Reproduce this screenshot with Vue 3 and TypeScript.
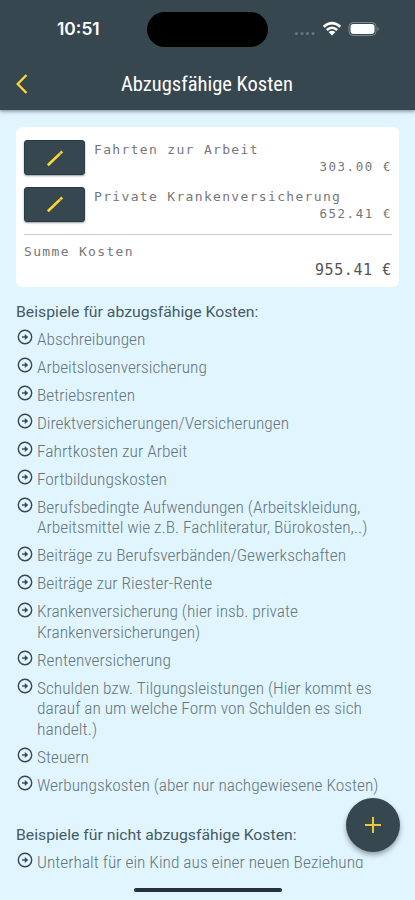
<script setup lang="ts">
import { nextTick } from 'vue'

interface Line { text: string; width: number }

const costs = [
  { name: 'Fahrten zur Arbeit', amount: '303.00 €' },
  { name: 'Private Krankenversicherung', amount: '652.41 €' },
]

const deductible: Line[][] = [
  [{ text: 'Abschreibungen', width: 108 }],
  [{ text: 'Arbeitslosenversicherung', width: 170 }],
  [{ text: 'Betriebsrenten', width: 98 }],
  [{ text: 'Direktversicherungen/Versicherungen', width: 252.5 }],
  [{ text: 'Fahrtkosten zur Arbeit', width: 150 }],
  [{ text: 'Fortbildungskosten', width: 129.5 }],
  [
    { text: 'Berufsbedingte Aufwendungen (Arbeitskleidung,', width: 323 },
    { text: 'Arbeitsmittel wie z.B. Fachliteratur, Bürokosten,..)', width: 330 },
  ],
  [{ text: 'Beiträge zu Berufsverbänden/Gewerkschaften', width: 309 }],
  [{ text: 'Beiträge zur Riester-Rente', width: 175 }],
  [
    { text: 'Krankenversicherung (hier insb. private', width: 261 },
    { text: 'Krankenversicherungen)', width: 163 },
  ],
  [{ text: 'Rentenversicherung', width: 134 }],
  [
    { text: 'Schulden bzw. Tilgungsleistungen (Hier kommt es', width: 335 },
    { text: 'darauf an um welche Form von Schulden es sich', width: 325 },
    { text: 'handelt.)', width: 60 },
  ],
  [{ text: 'Steuern', width: 52 }],
  [{ text: 'Werbungskosten (aber nur nachgewiesene Kosten)', width: 342 }],
]

const notDeductible: Line[][] = [
  [{ text: 'Unterhalt für ein Kind aus einer neuen Beziehung', width: 327 }],
]

const groups = [
  { title: 'Beispiele für abzugsfähige Kosten:', width: 242, items: deductible },
  { title: 'Beispiele für nicht abzugsfähige Kosten:', width: 280.5, items: notDeductible },
]

// Condenses a line of text to the given width.
const vFit = {
  mounted(el: HTMLElement, binding: { value: number }) {
    nextTick(() => {
      el.style.transform = `scaleX(${binding.value / el.offsetWidth})`
    })
  },
}
</script>

<template>
  <div class="screen">
    <header class="top">
      <div class="status">
        <span class="time"><span v-fit="43" class="fit">10:51</span></span>
        <span class="island"></span>
        <span class="signals">
          <svg class="dots" width="22" height="5" viewBox="0 0 22 5">
            <circle cx="2.5" cy="2.5" r="1.5" /><circle cx="8" cy="2.5" r="1.5" />
            <circle cx="13.5" cy="2.5" r="1.5" /><circle cx="19" cy="2.5" r="1.5" />
          </svg>
          <svg class="wifi" width="20" height="16" viewBox="0 0 20 16">
            <path d="M1.7 5.8Q10-1.6 18.3 5.8M4.8 9Q10 4.5 15.2 9" />
            <path class="solid" d="M6.6 11Q10 8.4 13.4 11L10 14.5Z" />
          </svg>
          <svg class="battery" width="32" height="16" viewBox="0 0 32 16">
            <rect class="shell" x="1" y="1.5" width="27" height="13" rx="4" />
            <rect class="charge" x="2.5" y="3" width="24" height="10" rx="3" />
            <path class="charge tip" d="M29.5 6Q32 8 29.5 10Z" />
          </svg>
        </span>
      </div>
      <div class="bar">
        <svg class="back" width="14" height="22" viewBox="0 0 14 22"><path d="M11.5 2 2.7 11l8.8 9" /></svg>
        <h1><span v-fit="172" class="fit">Abzugsfähige Kosten</span></h1>
      </div>
    </header>

    <main>
      <section class="card">
        <div v-for="cost in costs" :key="cost.name" class="cost">
          <button class="edit" aria-label="Bearbeiten">
            <svg width="18" height="18" viewBox="0 0 18 18"><path d="M1.8 16.2 14 4.6" /><path d="M14.2 4.4l2-1.9" /></svg>
          </button>
          <div class="detail">
            <span class="mono">{{ cost.name }}</span>
            <span class="mono amount">{{ cost.amount }}</span>
          </div>
        </div>
        <div class="sum">
          <span class="mono">Summe Kosten</span>
          <span class="mono total">955.41 €</span>
        </div>
      </section>

      <section v-for="group in groups" :key="group.title" class="group">
        <h2><span v-fit="group.width" class="fit">{{ group.title }}</span></h2>
        <ul>
          <li v-for="(item, i) in group.items" :key="i">
            <svg class="bullet" width="16" height="16" viewBox="0 0 16 16">
              <circle cx="8" cy="8" r="6.7" />
              <path d="M5 8h5" /><path class="head" d="M7.8 5 11.2 8l-3.4 3Z" />
            </svg>
            <div>
              <div v-for="line in item" :key="line.text" class="line">
                <span v-fit="line.width" class="fit">{{ line.text }}</span>
              </div>
            </div>
          </li>
        </ul>
      </section>
    </main>

    <footer><span class="home"></span></footer>
    <button class="add" aria-label="Hinzufügen">
      <svg width="18" height="18" viewBox="0 0 18 18"><path d="M9 1v16M1 9h16" /></svg>
    </button>
  </div>
</template>

<style>
body { background: #e1f5fe; }
</style>

<style scoped>
.screen {
  position: relative;
  display: flex;
  flex-direction: column;
  height: 900px;
  overflow: hidden;
  background: #e1f5fe;
  color: #37474f;
  font-family: Roboto, sans-serif;
}
.fit {
  display: inline-block;
  white-space: nowrap;
  transform-origin: left center;
}
.top {
  flex: none;
  height: 110px;
  background: #37474f;
  box-shadow: 0 1px 4px rgba(0, 0, 0, .5);
  color: #fff;
  z-index: 1;
}
.status {
  display: grid;
  grid-template-columns: 147px 121px 1fr;
  height: 58px;
  align-items: center;
}
.time { padding-left: 57px; font: 600 17px/20px Inter, sans-serif; }
.island { height: 35px; border-radius: 18px; background: #000; }
.signals { display: flex; align-items: center; padding-left: 26px; }
.dots { fill: #6b777d; margin-top: 8px; }
.wifi { margin-left: 6px; fill: none; stroke: #fff; stroke-width: 2.6; }
.wifi .solid { fill: #fff; stroke: none; }
.battery { margin-left: 6px; }
.shell { fill: none; stroke: #7b878c; stroke-width: 1; }
.charge { fill: #fff; }
.tip { fill: #87939a; }
.bar {
  display: grid;
  grid-template-columns: 106px 1fr;
  height: 52px;
  align-items: center;
}
.back { margin-left: 15px; fill: none; stroke: #fdd835; stroke-width: 2.3; }
h1 {
  margin: 0 0 0 15px;
  font-size: 21px;
  line-height: 28px;
  font-weight: 400;
  font-stretch: 75%;
}
main { flex: none; height: 757.5px; padding: 17px 16px 0; box-sizing: border-box; overflow: hidden; }
.card {
  height: 160px;
  box-sizing: border-box;
  padding: 13px 7px 0 8px;
  border-radius: 6px;
  background: #fff;
}
.cost { display: flex; gap: 9px; height: 46.5px; }
.edit {
  flex: none;
  width: 61px;
  height: 35px;
  padding: 0;
  display: grid;
  place-items: center;
  border: 1px solid #263c48;
  border-radius: 3px;
  background: #37474f;
  box-shadow: 0 1px 2px rgba(0, 0, 0, .4);
}
.edit svg { fill: none; stroke: #fdd835; stroke-width: 2.6; }
.detail { flex: 1; display: flex; flex-direction: column; }
.mono {
  font-family: "DejaVu Sans Mono", monospace;
  font-size: 13px;
  line-height: 20px;
  letter-spacing: 1.33px;
  color: #777;
  white-space: nowrap;
}
.amount { align-self: flex-end; margin-top: -3px; font-size: 12.5px; letter-spacing: 1.55px; }
.sum {
  display: flex;
  flex-direction: column;
  padding-top: 7px;
  margin-top: 1px;
  border-top: 1px solid #ccc;
}
.total { align-self: flex-end; font-size: 15px; margin-top: -2px; letter-spacing: .6px; color: #555; }
h2 {
  margin: 0;
  font-size: 15px;
  line-height: 20px;
  font-weight: 400;
  color: #455a64;
}
.group { padding-top: 15px; }
.group + .group { padding-top: 22.2px; }
ul { list-style: none; margin: 7px 0 0; padding: 0; }
li { display: flex; gap: 4px; padding-bottom: 7.62px; }
.bullet { flex: none; margin: .4px 0 0 1px; fill: none; stroke: #37474f; stroke-width: 1.4; }
.bullet .head { fill: #37474f; stroke: none; }
.line {
  height: 20.4px;
  font-size: 17px;
  line-height: 20.4px;
  font-weight: 300;
  font-stretch: 75%;
  color: #65757c;
}
footer { display: flex; justify-content: center; padding-top: 20px; }
.home { width: 148px; height: 4px; border-radius: 2px; background: #263238; }
.add {
  position: absolute;
  right: 15px;
  bottom: 48px;
  width: 54px;
  height: 54px;
  padding: 0;
  display: grid;
  place-items: center;
  border: 0;
  border-radius: 50%;
  background: #37474f;
  box-shadow: 0 3px 5px rgba(0, 0, 0, .35);
}
.add svg { fill: none; stroke: #e9c83a; stroke-width: 2; }
</style>
